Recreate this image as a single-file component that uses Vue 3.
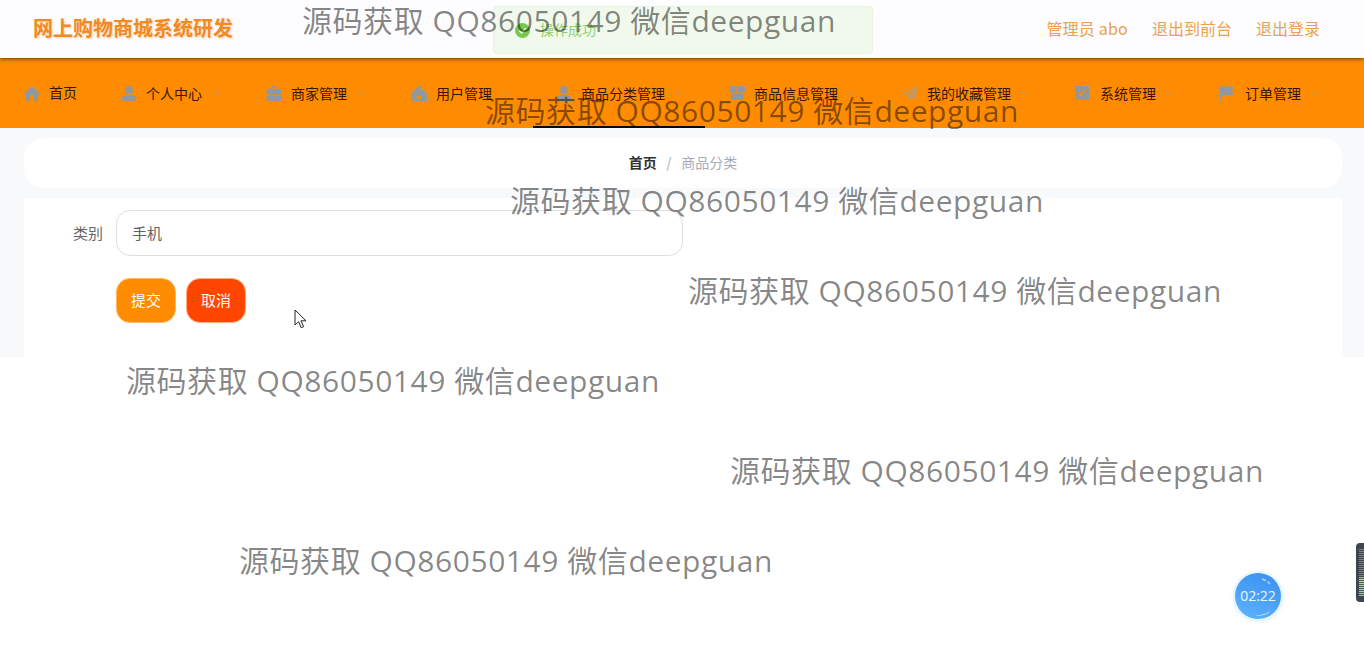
<script setup>
const navItems = [
  { name: '首页', icon: 'home', sub: false },
  { name: '个人中心', icon: 'user', sub: true },
  { name: '商家管理', icon: 'bag', sub: true },
  { name: '用户管理', icon: 'shop', sub: true },
  { name: '商品分类管理', icon: 'user', sub: true },
  { name: '商品信息管理', icon: 'video', sub: true },
  { name: '我的收藏管理', icon: 'send', sub: true },
  { name: '系统管理', icon: 'check', sub: true },
  { name: '订单管理', icon: 'flag', sub: true }
]

// 水印的位置
const marks = [
  { x: 302, y: -1 },
  { x: 485, y: 89 },
  { x: 510, y: 179 },
  { x: 688, y: 269 },
  { x: 126, y: 359 },
  { x: 730, y: 449 },
  { x: 239, y: 539 }
]

const iconPaths = {
  home: 'M8 0 0 7.500 1.200 9 2 8.300V15h4v-4a2 2 0 0 1 4 0v4h4V8.300l.8.700L16 7.500z',
  user: 'M8 0a3.900 3.900 0 1 0 0 7.800A3.900 3.900 0 0 0 8 0zM1 15v-2.500C1 10 3.500 8.800 8 8.800s7 1.200 7 3.700V15z',
  bag: 'M5.500 0h5l.8 3H15.500v5.500H.5V3h3.700zM6.500 1.300 6 3h4l-.5-1.700zM.5 9.500h15V15H.5z',
  shop: 'M2.500 4H5V2h1.500V0h4v4h3L16 8v7H0V8zM7.800 1.300V4h1.400V1.300zM5.500 10v2.500h5V10z',
  video: 'M0 0h7.500v6.500H0zM8.500 0H16v6.500H8.500zM2 7.500h12V14H2z',
  send: 'M16 0 0 7.500l5.500 1.800L7.200 15l2.300-3.500 3.500 1.500zM5.800 8.300 13 3 7.300 9.500 7.600 12z',
  check: 'M0 0h14v14H0zM3 7l3 3.200L11.500 4l-1-.9-4.500 5L4 6z',
  flag: 'M0 0h1.200v.5H14L11.800 4.500 14 9H1.200v7H0z'
}
</script>

<template>
  <div class="page">
    <header class="topbar">
      <div class="brand">网上购物商城系统研发</div>
      <div class="top-links">
        <span class="admin-name">管理员 abo</span>
        <span>退出到前台</span>
        <span>退出登录</span>
      </div>
    </header>

    <nav class="menu">
      <div v-for="item in navItems" :key="item.name" class="menu-item" :class="{ 'menu-home': !item.sub }">
        <svg class="menu-icon" :class="'icon-' + item.icon" viewBox="0 0 16 16"><path :d="iconPaths[item.icon]" fill-rule="evenodd" /></svg>
        <span class="menu-text">{{ item.name }}</span>
        <svg v-if="item.sub" class="menu-arrow" viewBox="0 0 12 12"><path d="M2 4l4 4 4-4" /></svg>
      </div>
      <i class="menu-line"></i>
    </nav>

    <main class="content">
      <div class="crumb">
        <span class="crumb-home">首页</span>
        <span class="crumb-sep">/</span>
        <span class="crumb-now">商品分类</span>
      </div>
      <section class="form-card">
        <div class="form-row">
          <label class="form-label">类别</label>
          <div class="form-input">手机</div>
        </div>
        <div class="form-btns">
          <button class="btn btn-ok">提交</button>
          <button class="btn btn-cancel">取消</button>
        </div>
      </section>
    </main>

    <div class="message">
      <svg class="message-icon" viewBox="0 0 16 16">
        <circle cx="8" cy="8" r="8" fill="#78c850" />
        <path d="M4.500 8.200l2.500 2.500 4.500-5" fill="none" stroke="#f0f9eb" stroke-width="1.500" />
      </svg>
      <span>操作成功</span>
    </div>

    <div v-for="m in marks" :key="m.y" class="watermark" :style="{ left: m.x + 'px', top: m.y + 'px' }">
      源码获取 QQ86050149 微信deepguan
    </div>

    <svg class="cursor" viewBox="0 0 14 20">
      <path d="M1 1v15l3.600-3.300 2.600 6 2.400-1-2.600-5.900h5z" fill="#fff" stroke="#222" stroke-width="1" />
    </svg>

    <div class="timer">
      <svg class="timer-shine" viewBox="0 0 46 46">
        <path d="M27 6q5 1.500 8 5" fill="none" stroke="#b5d6fa" stroke-width="1.500" stroke-dasharray="4 2" />
        <path d="M17 42.500q11 1 19-5q-6 7-19 5z" fill="#d5ecff" />
      </svg>
      <span>02:22</span>
    </div>

    <div class="side-widget">
      <i class="side-bars"></i>
    </div>
  </div>
</template>

<style>
html,
body {
  background: #fff;
  overflow: hidden;
}
</style>

<style scoped>
.page {
  position: relative;
  width: 1364px;
  height: 654px;
  overflow: hidden;
  font-family: "Noto Sans CJK SC", "Open Sans", sans-serif;
}

.topbar {
  position: relative;
  z-index: 2;
  height: 58px;
  padding: 0 44px 0 33px;
  box-sizing: border-box;
  display: flex;
  align-items: center;
  justify-content: space-between;
  background: #fdfcfe;
  box-shadow: 0 1px 4px rgba(60, 30, 0, 0.75);
}

.brand {
  padding-bottom: 3px;
  font-size: 20px;
  font-weight: 700;
  color: #f08a24;
  text-shadow: 1px 1px 2px rgba(240, 138, 36, 0.35);
}

.top-links {
  display: flex;
  gap: 24px;
  padding-bottom: 3px;
  font-size: 16px;
  color: #e9a24e;
}

.admin-name {
  letter-spacing: 0.2px;
}

.menu {
  position: relative;
  height: 70px;
  padding-left: 24px;
  display: flex;
  align-items: center;
  gap: 44px;
  background: #ff8c00;
}

.menu-item {
  display: flex;
  align-items: center;
  font-size: 14px;
  color: #3a1600;
}

.menu-home .menu-text {
  margin-bottom: 2px;
}

.menu-icon {
  width: 16px;
  height: 16px;
  margin: 1px 9px 0 0;
  fill: #8f989f;
}

.menu-icon.icon-send {
  fill: #c09a68;
}

.menu-icon.icon-check {
  fill: #93979c;
}

.menu-arrow {
  width: 12px;
  height: 12px;
  margin-left: 8px;
  fill: none;
  stroke: #c49a64;
  stroke-width: 1;
}

.menu-line {
  position: absolute;
  left: 533px;
  bottom: 0;
  width: 172px;
  height: 2px;
  background: #110800;
}

.content {
  height: 229px;
  padding: 10px 22px 0 24px;
  box-sizing: border-box;
  background: #f7f9fb;
}

.crumb {
  height: 50px;
  padding-bottom: 2px;
  box-sizing: border-box;
  display: flex;
  align-items: center;
  justify-content: center;
  gap: 9.500px;
  border-radius: 20px;
  background: #fff;
  font-size: 14px;
}

.crumb-home {
  font-weight: 700;
  color: #303133;
}

.crumb-sep {
  color: #c0c4cc;
  font-weight: 700;
}

.crumb-now {
  color: #a8abb8;
}

.form-card {
  height: 159px;
  margin-top: 10px;
  padding: 12px 0 0 49px;
  box-sizing: border-box;
  background: #fff;
}

.form-row {
  display: flex;
  align-items: center;
}

.form-label {
  width: 43px;
  padding-bottom: 2px;
  font-size: 15px;
  color: #666;
}

.form-input {
  width: 567px;
  height: 46px;
  padding: 0 0 2px 15px;
  box-sizing: border-box;
  display: flex;
  align-items: center;
  border: 1px solid #dcdfe6;
  border-radius: 14px;
  font-size: 15px;
  color: #606266;
}

.form-btns {
  display: flex;
  gap: 10px;
  margin: 22px 0 0 43px;
}

.btn {
  width: 60px;
  height: 45px;
  padding: 0 0 3px;
  border: 1px solid transparent;
  border-radius: 14px;
  font-family: inherit;
  font-size: 15px;
  color: #fff;
}

.btn-ok {
  background: #ff8c00;
  border-color: #ffb95f;
}

.btn-cancel {
  background: #ff4500;
  border-color: #ffb080;
}

.message {
  position: absolute;
  z-index: 3;
  left: 493px;
  top: 6px;
  width: 380px;
  height: 48px;
  padding: 0 0 2px 21px;
  box-sizing: border-box;
  display: flex;
  align-items: center;
  gap: 10px;
  border: 1px solid #e8f3e0;
  border-radius: 4px;
  background: #f0f9eb;
  font-size: 14px;
  color: #8fd06e;
}

.message-icon {
  width: 15px;
  height: 15px;
  margin-top: 2px;
}

.watermark {
  position: absolute;
  z-index: 4;
  font-family: "Open Sans", "Noto Sans CJK SC", sans-serif;
  font-size: 30px;
  letter-spacing: 0.55px;
  line-height: 43px;
  white-space: nowrap;
  color: rgba(0, 0, 0, 0.48);
  pointer-events: none;
}

.cursor {
  position: absolute;
  z-index: 5;
  left: 294px;
  top: 309px;
  width: 14px;
  height: 20px;
}

.timer {
  position: absolute;
  z-index: 5;
  left: 1235px;
  top: 573px;
  width: 46px;
  height: 46px;
  padding-bottom: 1px;
  box-sizing: border-box;
  display: flex;
  align-items: center;
  justify-content: center;
  border-radius: 50%;
  background: linear-gradient(200deg, #3a8ef0, #58aefa 85%);
  box-shadow: 0 0 0 2px #e3f5fd, 0 1px 5px rgba(120, 190, 240, 0.5);
  font-family: "Open Sans", sans-serif;
  font-size: 14px;
  color: #eef7ff;
}

.timer-shine {
  position: absolute;
  left: 0;
  top: 0;
  width: 46px;
  height: 46px;
}

.side-widget {
  position: absolute;
  z-index: 5;
  left: 1356px;
  top: 543px;
  width: 8px;
  height: 59px;
  padding: 6px 0 6px 3px;
  box-sizing: border-box;
  border-radius: 4px 0 0 4px;
  background: #40464f;
}

.side-bars {
  display: block;
  width: 5px;
  height: 100%;
  background:
    repeating-linear-gradient(rgba(0, 0, 0, 0) 0 1px, rgba(40, 44, 52, 0.7) 1px 2px),
    linear-gradient(#7b8089 60%, #c3d884 61%, #6fd6b0 100%);
}
</style>
